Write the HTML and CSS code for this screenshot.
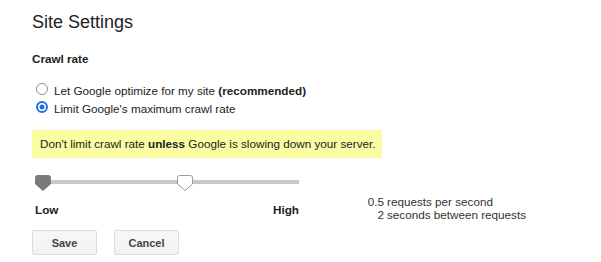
FILE: index.html
```html
<!DOCTYPE html>
<html>
<head>
	<title>Site Settings</title>
	<link rel="stylesheet" href="styles.css">
</head>
<body>
	<div class="page">
		<h1 class="title">Site Settings</h1>
		<h2 class="section">Crawl rate</h2>
		<div class="options">
			<label class="option"><span class="radio"></span>Let Google optimize for my site&nbsp;<b>(recommended)</b></label>
			<label class="option"><span class="radio checked"></span>Limit Google's maximum crawl rate</label>
		</div>
		<div class="notice">Don't limit crawl rate <b>unless</b> Google is slowing down your server.</div>
		<div class="rate">
			<div class="slider-col">
				<div class="slider">
					<div class="track"></div>
					<svg class="thumb thumb-min" width="16" height="16" viewBox="0 0 16 16">
						<path d="M2.5 0.5 H13.5 A2 2 0 0 1 15.5 2.5 V9 L8 15.5 L0.5 9 V2.5 A2 2 0 0 1 2.5 0.5 Z" fill="#7a7a7a" stroke="#7a7a7a"/>
					</svg>
					<svg class="thumb thumb-cur" width="16" height="16" viewBox="0 0 16 16">
						<path d="M2.5 0.5 H13.5 A2 2 0 0 1 15.5 2.5 V9 L8 15.5 L0.5 9 V2.5 A2 2 0 0 1 2.5 0.5 Z" fill="#fff" stroke="#9a9a9a"/>
					</svg>
				</div>
				<div class="labels"><span>Low</span><span>High</span></div>
			</div>
			<div class="stats">
				<span class="num">0.5</span><span>requests per second</span>
				<span class="num">2</span><span>seconds between requests</span>
			</div>
		</div>
		<div class="buttons">
			<button class="btn">Save</button>
			<button class="btn">Cancel</button>
		</div>
	</div>
</body>
</html>
```

FILE: styles.css
```css
body {
	margin: 0;
	background-color: #fff;
	font-family: "Liberation Sans", Arial, sans-serif;
	color: #222;
}
.page {
	padding: 11px 0 0 32px;
}
.title {
	margin: 0;
	font-size: 18px;
	line-height: 22px;
	font-weight: normal;
}
.section {
	margin: 18px 0 0;
	font-size: 11.7px;
	line-height: 16px;
	font-weight: bold;
}
.options {
	margin-top: 14px;
}
.option {
	display: flex;
	align-items: center;
	height: 18px;
	font-size: 11.7px;
	white-space: nowrap;
}
.radio {
	box-sizing: border-box;
	width: 12px;
	height: 12px;
	margin: 0 6px 2px 4px;
	border: 1px solid #8c8c8c;
	border-radius: 50%;
	background-color: #fff;
}
.radio.checked {
	border: 2px solid #1f6fde;
	background: radial-gradient(circle, #1f6fde 0 2.2px, #fff 2.8px);
}
.notice {
	box-sizing: border-box;
	width: 350px;
	height: 28px;
	margin-top: 13px;
	padding-left: 8px;
	background-color: #fcfca2; /* pale yellow hint */
	font-size: 11.7px;
	line-height: 28px;
	white-space: nowrap;
}
.rate {
	display: flex;
	margin-top: 17px;
}
.slider-col {
	width: 267px;
}
.slider {
	position: relative;
	width: 264px;
	height: 16px;
	margin-left: 3px;
}
.track {
	position: absolute;
	left: 0;
	right: 0;
	top: 5px;
	height: 4px;
	background-color: #c8c8c8;
}
.thumb {
	position: absolute;
	top: 0;
}
.thumb-min {
	left: 0;
}
.thumb-cur {
	left: 142px;
}
.labels {
	display: flex;
	justify-content: space-between;
	margin: 11px 0 0 3px;
	font-size: 11.7px;
	line-height: 16px;
	font-weight: bold;
}
.stats {
	display: grid;
	grid-template-columns: 17px auto;
	column-gap: 3px;
	align-content: start;
	margin: 20px 0 0 68px;
	font-size: 11.7px;
	line-height: 13px;
	color: #333;
	white-space: nowrap;
}
.num {
	text-align: right;
}
.buttons {
	display: flex;
	gap: 17px;
	margin-top: 9px;
}
.btn {
	width: 65px;
	height: 25px;
	padding: 0;
	border: 1px solid #dcdcdc;
	border-radius: 2px;
	background: linear-gradient(#f8f8f8, #f1f1f1);
	font-family: "Liberation Sans", Arial, sans-serif;
	font-size: 11px;
	font-weight: bold;
	color: #444;
}
```
